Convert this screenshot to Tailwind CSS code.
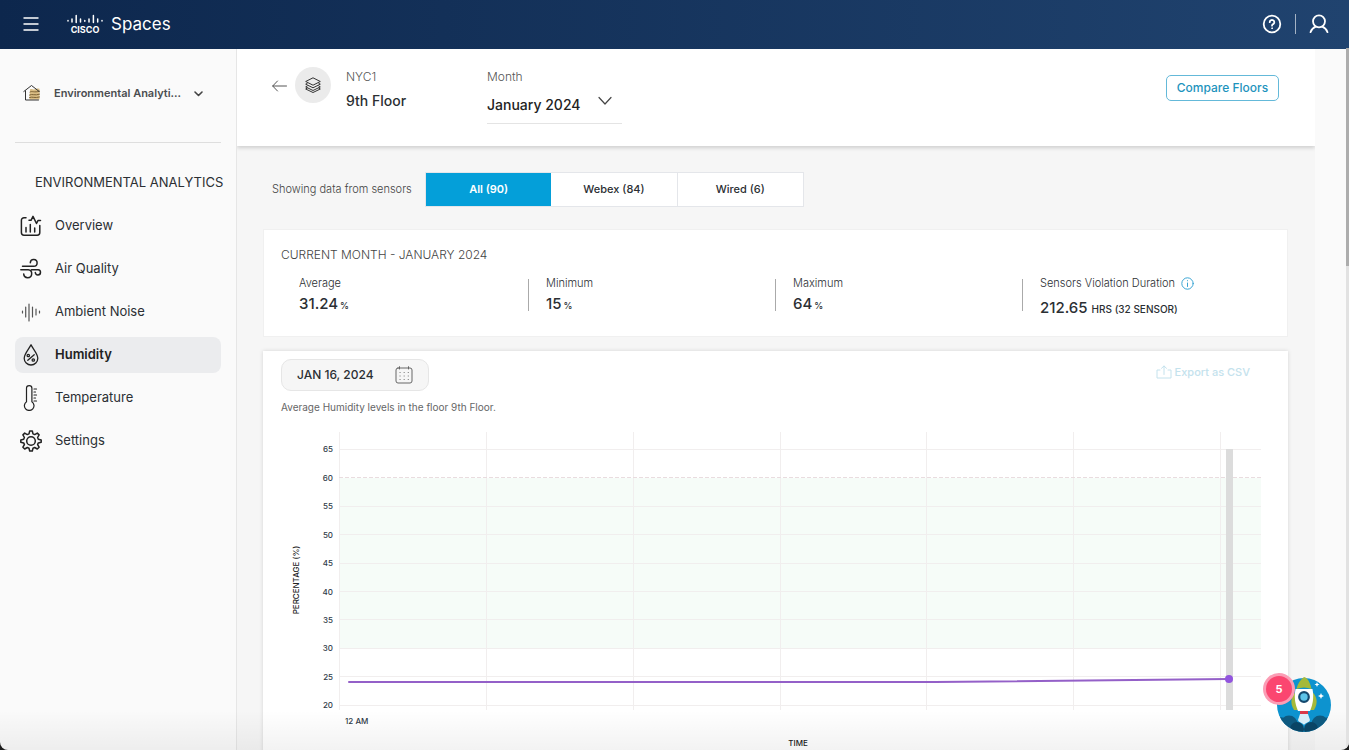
<!DOCTYPE html>
<html lang="en">
<head>
    <meta charset="UTF-8">
    <meta name="viewport" content="width=device-width, initial-scale=1.0">
    <title>Cisco Spaces - Environmental Analytics</title>
    <script src="https://cdn.jsdelivr.net/npm/@tailwindcss/browser@4"></script>
</head>
<body class="bg-[#1c1c1c] font-['Inter',sans-serif] text-[#2b2f33]">
<div class="relative flex h-screen flex-col overflow-hidden rounded-b-lg bg-[#fafafa]">

    <!-- Top Bar -->
    <header class="flex h-[49px] shrink-0 items-center bg-linear-to-r from-[#0d274d] to-[#20436f] pr-5 pb-0.5 pl-[23px] text-white">
        <button type="button" aria-label="Menu">
            <svg class="h-4 w-4" viewBox="0 0 16 16" fill="none" stroke="currentColor" stroke-width="1.3"><path d="M0.5 2h15M0.5 8h15M0.5 14h15"/></svg>
        </button>
        <a href="#" class="ml-7 flex items-center">
            <span class="flex w-9 flex-col items-center">
                <svg class="h-3 w-9" viewBox="0 0 36 12" fill="none" stroke="currentColor" stroke-width="1.5" stroke-linecap="round">
                    <path d="M1 6.5v.6M5 5v3M9.2 1.5v7M13.5 5v3M17.8 6.5v.8M22 5v3M26.4 1.5v7M30.7 5v3M35 6.5v.6"/>
                </svg>
                <span class="text-[9px] leading-[8px] font-bold">CISCO</span>
            </span>
            <span class="ml-2 text-[17px] leading-6">Spaces</span>
        </a>
        <div class="ml-auto flex items-center">
            <button type="button" aria-label="Help">
                <svg class="h-5 w-5" viewBox="0 0 20 20" fill="none" stroke="currentColor" stroke-width="1.8" stroke-linecap="round">
                    <circle cx="10" cy="10" r="8.3"/>
                    <path d="M7.7 8.2a2.3 2.2 0 1 1 3.5 1.9c-.8.5-1.2.8-1.2 1.6"/>
                    <circle cx="10" cy="14.2" r=".4" fill="currentColor" stroke-width="1"/>
                </svg>
            </button>
            <span class="mx-[13px] h-5 w-px bg-white/60"></span>
            <button type="button" aria-label="Account">
                <svg class="h-5 w-5" viewBox="0 0 20 20" fill="none" stroke="currentColor" stroke-width="1.8" stroke-linecap="round">
                    <circle cx="10" cy="7.3" r="6"/>
                    <path d="M1.5 18.2c1-3 3-4.7 5.2-5.6M18.5 18.2c-1-3-3-4.7-5.2-5.6"/>
                </svg>
            </button>
        </div>
    </header>

    <div class="flex min-h-0 flex-1">

        <!-- Sidebar -->
        <aside class="w-[237px] shrink-0 border-r border-[#e6e6e6] pl-[15px] pr-[15px]">
            <button type="button" class="flex h-[94px] w-full items-center border-b border-[#dedede] pb-[5px] pl-2 text-left">
                <svg class="h-[18px] w-[18px]" viewBox="0 0 18 18" fill="none" stroke-linecap="round" stroke-linejoin="round">
                    <path d="M7 5.5c2-1.5 3 1 5-.3s3-.7 4.500-.5v10.800H6.500z" fill="#d9bd84"/>
                    <path d="M7 8c2-1.500 4 1 9.500-.8M6.500 11c3-1.500 5 1 10-.8M6.500 13.500c3-1.200 5 1 10-.5" stroke="#7b6234"/>
                    <path d="M.8 7.500 8.500 1.500l7.700 6M2.500 6.800v9.200h13" stroke="#333"/>
                </svg>
                <span class="ml-[13px] w-[128px] truncate text-[11px] font-semibold text-[#4a4d50]">Environmental Analytics</span>
                <svg class="ml-3 h-[9px] w-[9px]" viewBox="0 0 9 9" fill="none" stroke="#444" stroke-width="1.6" stroke-linecap="round" stroke-linejoin="round"><path d="m1 3 3.500 3.500L8 3"/></svg>
            </button>
            <h2 class="mt-[29px] pl-5 text-[13px] leading-5 whitespace-nowrap">ENVIRONMENTAL ANALYTICS</h2>
            <nav class="mt-4 flex flex-col gap-[7px] text-[13px]">
                <a href="#" class="flex h-9 items-center gap-[13px] rounded-lg pl-[5px]">
                    <svg class="h-[22px] w-[22px]" viewBox="0 0 22 22" fill="none" stroke="#222" stroke-width="1.5" stroke-linecap="round" stroke-linejoin="round">
                        <path d="M6 2.800H4A2.600 2.600 0 0 0 1.400 5.400v12.200A2.600 2.600 0 0 0 4 20.200h13.200a2.600 2.600 0 0 0 2.600-2.600v-7"/>
                        <path d="M9 5.300h2l2-4 3.500 7.200 1.500-3h2.500M6 17v-4.500M10.300 17v-7.500M14.700 17v-4"/>
                    </svg>
                    Overview
                </a>
                <a href="#" class="flex h-9 items-center gap-[13px] rounded-lg pl-[5px]">
                    <svg class="h-[22px] w-[22px]" viewBox="0 0 22 22" fill="none" stroke="#222" stroke-width="1.5" stroke-linecap="round">
                        <path d="M2.500 8.300h11.200a3.400 3.400 0 1 0-3.400-3.600M.8 11.700h7.400a4 4 0 1 1-4.500 4.200M11.500 11.700h6.600a2.600 2.600 0 1 1-2.800 2.800"/>
                    </svg>
                    Air Quality
                </a>
                <a href="#" class="flex h-9 items-center gap-[13px] rounded-lg pl-[5px]">
                    <svg class="h-[22px] w-[22px]" viewBox="0 0 22 22" fill="none" stroke="#555" stroke-width="1.2" stroke-linecap="round">
                        <path d="M2.500 10v2M5.700 6v10M9 3v17M12.500 6v10M16 8v6M19.500 10v2"/>
                    </svg>
                    Ambient Noise
                </a>
                <a href="#" class="flex h-9 items-center gap-[13px] rounded-lg bg-[#ebecee] pl-[5px] font-semibold text-[#222]">
                    <svg class="h-[22px] w-[22px]" viewBox="0 0 22 22" fill="none" stroke="#222" stroke-width="1.3" stroke-linecap="round" stroke-linejoin="round">
                        <path d="M11 .8C9 5 4.200 10 4.200 14.200a6.800 6.800 0 0 0 13.600 0C17.800 10 13 5 11 .8z"/>
                        <path d="m7.800 16.300 6.400-5.600"/>
                        <circle cx="8.300" cy="11.500" r="1.200"/><circle cx="13.300" cy="16" r="1.200"/>
                    </svg>
                    Humidity
                </a>
                <a href="#" class="flex h-9 items-center gap-[13px] rounded-lg pl-[5px]">
                    <svg class="h-[26px] w-[22px]" viewBox="0 0 22 26" fill="none" stroke="#222" stroke-width="1.2" stroke-linecap="round">
                        <path d="M6.500 16.700V3.300a2.700 2.700 0 0 1 5.400 0v13.400a4.800 4.800 0 1 1-5.400 0z"/>
                        <path d="M14 4h2.500M14 7h1.500M14 10h2.500M14 13h1.500M14 16h2.500"/>
                    </svg>
                    Temperature
                </a>
                <a href="#" class="flex h-9 items-center gap-[13px] rounded-lg pl-[5px]">
                    <svg class="h-[22px] w-[22px]" viewBox="0 0 22 22" fill="none" stroke="#222" stroke-width="1.5" stroke-linejoin="round">
                        <path d="M9.700 1h2.600l.7 2.900 1.700.7 2.600-1.500 1.800 1.800-1.500 2.600.7 1.700 2.900.7v2.300l-2.900.7-.7 1.700 1.500 2.600-1.800 1.800-2.600-1.500-1.700.7-.7 2.800H9.700L9 18.200l-1.700-.7L4.700 19l-1.800-1.800 1.500-2.600-.7-1.700-2.900-.7V9.900l2.900-.7.7-1.700-1.500-2.600 1.800-1.800 2.600 1.500L9 3.900z"/>
                        <circle cx="11" cy="11" r="4.300"/>
                    </svg>
                    Settings
                </a>
            </nav>
        </aside>

        <!-- Main Content -->
        <main class="mr-[34px] min-w-0 flex-1 overflow-hidden bg-[#f6f6f6]">

            <!-- Floor Header -->
            <div class="flex h-[97px] items-start bg-white pl-[35px] pr-9 shadow-[0_2px_4px_rgba(0,0,0,0.16)]">
                <button type="button" aria-label="Back" class="mt-[31px]">
                    <svg class="h-3 w-[15px]" viewBox="0 0 15 12" fill="none" stroke="#555" stroke-linecap="round" stroke-linejoin="round"><path d="M14.500 6H.7M5.500 1 .7 6l4.800 5"/></svg>
                </button>
                <span class="mt-[18px] ml-2 flex h-9 w-9 items-center justify-center rounded-full bg-[#ebebeb]">
                    <svg class="h-4 w-4" viewBox="0 0 16 16" fill="none" stroke="#333" stroke-linejoin="round">
                        <path d="M8 .8 15.300 4.500 8 8.200.7 4.500zM2.500 6.200.7 7.200 8 10.800l7.300-3.600-1.800-1M2.500 8.800.7 9.900 8 13.500l7.300-3.600-1.800-1.100M2.500 10.900.7 12 8 15.500l7.300-3.500-1.800-1.100"/>
                    </svg>
                </span>
                <div class="mt-[18px] ml-[15px] w-[141px]">
                    <p class="text-xs leading-5 font-light text-[#555]">NYC1</p>
                    <p class="mt-1 text-sm leading-5 font-medium">9th Floor</p>
                </div>
                <div class="mt-[18px] w-[135px]">
                    <label for="month" class="block text-xs leading-5 font-light text-[#555]">Month</label>
                    <div class="relative border-b border-[#e4e4e4]">
                        <select id="month" class="h-9 w-full appearance-none bg-transparent text-sm font-medium text-[#222]">
                            <option>January 2024</option>
                        </select>
                        <svg class="pointer-events-none absolute top-2 right-2.5 h-3 w-3.5" viewBox="0 0 14 12" fill="none" stroke="#444" stroke-width="1.2" stroke-linecap="round" stroke-linejoin="round"><path d="m1 2.500 6 6.500 6-6.500"/></svg>
                    </div>
                </div>
                <button type="button" class="mt-[26px] ml-auto h-[26px] w-[113px] rounded-[5px] border border-[#64b9d9] text-xs font-medium text-[#1d93bd]">Compare Floors</button>
            </div>

            <!-- Sensor Filter -->
            <div class="mt-[26px] flex items-center pl-[35px]">
                <p class="w-[153px] text-[11px] font-light text-[#444]">Showing data from sensors</p>
                <div class="flex h-[35px] w-[379px] border border-[#e4e6ea] bg-white text-[11px] font-medium">
                    <button type="button" class="flex-1 bg-[#049fd9] font-semibold text-white">All (90)</button>
                    <button type="button" class="flex-1">Webex (84)</button>
                    <button type="button" class="flex-1 border-l border-[#e4e6ea]">Wired (6)</button>
                </div>
            </div>

            <!-- Month Summary -->
            <section class="mt-[22px] ml-[26px] mr-[27px] h-[108px] border border-[#f0f0f0] bg-white pt-[17px] pr-[18px] pl-[17px]">
                <h2 class="text-xs leading-4 font-light text-[#444]">CURRENT MONTH - JANUARY 2024</h2>
                <div class="mt-2 grid grid-cols-4">
                    <div class="pl-[18px]">
                        <p class="mt-0.5 text-[11px] leading-5 font-light">Average</p>
                        <p class="text-[15px] leading-[22px] font-medium">31.24 <span class="-ml-0.5 text-[9px]">%</span></p>
                    </div>
                    <div class="relative pl-[18px]">
                        <span class="absolute top-2 left-0 h-8 w-px bg-[#aaa]"></span>
                        <p class="mt-0.5 text-[11px] leading-5 font-light">Minimum</p>
                        <p class="text-[15px] leading-[22px] font-medium">15 <span class="-ml-0.5 text-[9px]">%</span></p>
                    </div>
                    <div class="relative pl-[18px]">
                        <span class="absolute top-2 left-0 h-8 w-px bg-[#aaa]"></span>
                        <p class="mt-0.5 text-[11px] leading-5 font-light">Maximum</p>
                        <p class="text-[15px] leading-[22px] font-medium">64 <span class="-ml-0.5 text-[9px]">%</span></p>
                    </div>
                    <div class="relative pl-[18px]">
                        <span class="absolute top-2 left-0 h-8 w-px bg-[#aaa]"></span>
                        <p class="mt-0.5 flex items-center gap-1.5 text-[11px] leading-5 font-light whitespace-nowrap">Sensors Violation Duration
                            <svg class="h-[13px] w-[13px]" viewBox="0 0 13 13" fill="none" stroke="#3aa5d4" stroke-linecap="round"><circle cx="6.500" cy="6.500" r="5.700"/><path d="M6.500 6v3.500M6.500 3.600v.2"/></svg>
                        </p>
                        <p class="mt-1 text-[15px] leading-[22px] font-medium whitespace-nowrap">212.65 <span class="text-[10px]">HRS (32 SENSOR)</span></p>
                    </div>
                </div>
            </section>

            <!-- Humidity Chart -->
            <section class="mt-[14px] ml-[26px] mr-[27px] bg-white shadow-[0_0_4px_rgba(0,0,0,0.14)]">
                <div class="flex items-start justify-between pt-2 pl-[18px] pr-[38px]">
                    <button type="button" class="flex h-8 w-[148px] items-center justify-between rounded-[10px] border border-[#e6e6e6] bg-[#f6f6f6] px-[15px] text-xs font-medium">
                        JAN 16, 2024
                        <svg class="h-[18px] w-[18px]" viewBox="0 0 18 18" fill="none" stroke="#666" stroke-linecap="round">
                            <rect x="1" y="2" width="16" height="15" rx="2"/>
                            <path d="M4.500.7V3M13.500.7V3"/>
                            <path d="M5 6.500h8.500M5 10h8.500M5 13.500h8.500" stroke-dasharray="0.100 4"/>
                        </svg>
                    </button>
                    <button type="button" disabled class="mt-[5px] flex items-center gap-[3px] text-[11px] leading-4 font-medium text-[#c4e2ed]">
                        <svg class="h-3.5 w-4" viewBox="0 0 16 14" fill="none" stroke="currentColor" stroke-linecap="round" stroke-linejoin="round"><path d="M4 5H1v8h14V5h-3M8 9.500V1M5.500 3.300 8 1l2.500 2.300"/></svg>
                        Export as CSV
                    </button>
                </div>
                <p class="mt-2 pl-[18px] text-[10px] leading-4 text-[#666]">Average Humidity levels in the floor 9th Floor.</p>
                <svg class="mt-[5px] block w-full" viewBox="0 0 1025 340" fill="none" font-size="8" font-weight="500">
                    <rect x="76" y="58" width="922" height="170" fill="#f6fcf8"/>
                    <g stroke="#f1eeee" shape-rendering="crispEdges">
                        <path d="M76 29.500h922M76 86.500h922M76 114.500h922M76 143.500h922M76 171.500h922M76 199.500h922M76 228.500h922M76 256.500h922M76 285.500h922"/>
                        <path d="M76.500 12v278M223.500 12v278M370.500 12v278M517.500 12v278M663.500 12v278M810.500 12v278M957.500 12v278"/>
                    </g>
                    <path d="M76 57.500h922" stroke="#e9dcdf" stroke-dasharray="4 2"/>
                    <rect x="963" y="29" width="7" height="261" fill="#dcdcdc"/>
                    <path d="M86 262H672L966 259" stroke="#9460c8" stroke-width="2" stroke-linecap="round"/>
                    <circle cx="966" cy="259" r="4" fill="#9254de"/>
                    <g fill="#2f3b48" text-anchor="end">
                        <text x="70" y="32">65</text>
                        <text x="70" y="61">60</text>
                        <text x="70" y="89">55</text>
                        <text x="70" y="118">50</text>
                        <text x="70" y="146">45</text>
                        <text x="70" y="175">40</text>
                        <text x="70" y="203">35</text>
                        <text x="70" y="231">30</text>
                        <text x="70" y="260">25</text>
                        <text x="70" y="288">20</text>
                    </g>
                    <text x="82" y="304" fill="#2f3b48">12 AM</text>
                    <text x="535" y="326" fill="#222" text-anchor="middle">TIME</text>
                    <text transform="translate(36 160) rotate(-90)" fill="#222" text-anchor="middle">PERCENTAGE (%)</text>
                </svg>
            </section>
        </main>
    </div>

    <!-- Bottom fade and scrollbar -->
    <div class="pointer-events-none absolute inset-x-0 bottom-0 h-10 bg-linear-to-b from-transparent to-black/5"></div>
    <div class="absolute top-12 right-0 bottom-0 w-[3px] bg-[#e2e2e2]">
        <div class="h-[218px] bg-[#adadad]"></div>
    </div>

    <!-- Help Launcher -->
    <button type="button" aria-label="Open guide" class="absolute right-[18px] bottom-[18px] h-[54px] w-[54px]">
        <svg class="h-full w-full overflow-visible" viewBox="0 0 54 54">
            <defs><clipPath id="launcher"><circle cx="27" cy="27" r="27"/></clipPath></defs>
            <circle cx="27" cy="27" r="27" fill="#0d93cf"/>
            <g clip-path="url(#launcher)">
                <g fill="#0e5a80"><circle cx="12" cy="46" r="8.500"/><circle cx="43" cy="46" r="8.500"/><circle cx="3" cy="48" r="9"/><circle cx="52" cy="48" r="9"/></g>
                <g fill="#0a4565"><circle cx="20" cy="51" r="7"/><circle cx="34" cy="51" r="7"/></g>
            </g>
            <path d="M20 13c-6 4-7.500 12-3 19h20c4.500-7 3-15-3-19z" fill="#a5b93a"/>
            <path d="M18.500 11h17c1.500 8 .5 15-2.500 22H21c-3-7-4-14-2.500-22z" fill="#fff"/>
            <path d="M27-1c-4 3-6.500 7-7.500 12 5-2 10-2 15 0C33.500 6 31-.5 27-1z" fill="#a5b93a"/>
            <circle cx="27" cy="19" r="4.800" fill="#5cc3e8" stroke="#15496e" stroke-width="2.200"/>
            <path d="M23 33h8v3h-8z" fill="#d93a4a"/>
            <path d="M23 36h8l2 6c-1 3-4 2-6 5-2-3-5-2-6-5z" fill="#d7eef8"/>
            <path d="m44 15 .9 2.100 2.100.9-2.100.9-.9 2.100-.9-2.100-2.100-.9 2.100-.9zM40 4l.7 1.800 1.800.7-1.800.7L40 9l-.7-1.800-1.800-.7 1.800-.7z" fill="#fff"/>
        </svg>
        <span class="absolute -top-[5px] -left-[14px] flex h-8 w-8 items-center justify-center rounded-full bg-[#fb9db5]">
            <span class="flex h-[26px] w-[26px] items-center justify-center rounded-full bg-[#fb4670] text-[11px] font-bold text-white">5</span>
        </span>
    </button>
</div>
</body>
</html>
